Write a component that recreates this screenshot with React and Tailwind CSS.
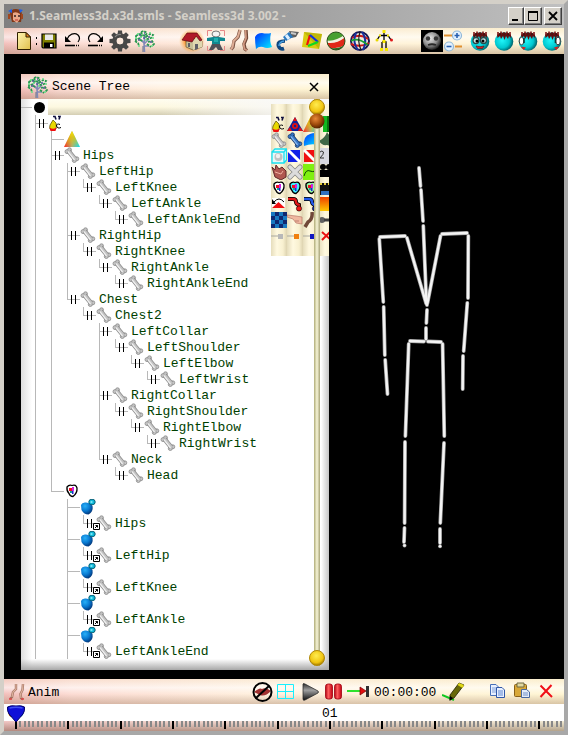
import React from "react";

const MONO = "font-['Liberation_Mono',monospace] text-[13px] leading-4";

function Svg({ w = 24, h = 24, children, className = "" }) {
  return (
    <svg width={w} height={h} viewBox={`0 0 ${w} ${h}`} className={`block shrink-0 ${className}`} aria-hidden="true">
      {children}
    </svg>
  );
}

function Defs() {
  return (
    <svg width="0" height="0" className="absolute" aria-hidden="true">
      <defs>
        <linearGradient id="paper" x1="0" y1="0" x2="1" y2="1">
          <stop offset="0" stopColor="#fff3b0" />
          <stop offset="1" stopColor="#dfc04c" />
        </linearGradient>
        <linearGradient id="flag" x1="0" y1="0" x2="1" y2="1">
          <stop offset="0" stopColor="#0030ff" />
          <stop offset="0.5" stopColor="#0090ff" />
          <stop offset="1" stopColor="#00f0ff" />
        </linearGradient>
        <linearGradient id="hot" x1="0" y1="1" x2="1" y2="1">
          <stop offset="0" stopColor="#ff2020" />
          <stop offset="0.5" stopColor="#b0b070" />
          <stop offset="1" stopColor="#00e0ff" />
        </linearGradient>
        <linearGradient id="topYellow" x1="0" y1="0" x2="0" y2="1">
          <stop offset="0" stopColor="#ffe800" />
          <stop offset="0.4" stopColor="#e8c800" stopOpacity="0.75" />
          <stop offset="1" stopColor="#e8c800" stopOpacity="0" />
        </linearGradient>
        <radialGradient id="blueBall" cx="0.35" cy="0.3" r="0.8">
          <stop offset="0" stopColor="#28b0f8" />
          <stop offset="0.5" stopColor="#0878d0" />
          <stop offset="1" stopColor="#002868" />
        </radialGradient>
        <radialGradient id="aqua" cx="0.4" cy="0.45" r="0.65">
          <stop offset="0" stopColor="#20f4f8" />
          <stop offset="0.6" stopColor="#00c8d0" />
          <stop offset="1" stopColor="#004850" />
        </radialGradient>
        <radialGradient id="gray" cx="0.4" cy="0.35" r="0.65">
          <stop offset="0" stopColor="#e8e8e8" />
          <stop offset="0.6" stopColor="#909090" />
          <stop offset="1" stopColor="#202020" />
        </radialGradient>
        <radialGradient id="gold" cx="0.45" cy="0.35" r="0.65">
          <stop offset="0" stopColor="#ffec50" />
          <stop offset="0.7" stopColor="#f0c410" />
          <stop offset="1" stopColor="#a07800" />
        </radialGradient>
        <radialGradient id="brown" cx="0.4" cy="0.35" r="0.65">
          <stop offset="0" stopColor="#e88838" />
          <stop offset="0.6" stopColor="#a04c0c" />
          <stop offset="1" stopColor="#582400" />
        </radialGradient>
        <linearGradient id="play" x1="0" y1="0" x2="0" y2="1">
          <stop offset="0" stopColor="#303030" />
          <stop offset="0.4" stopColor="#a0a0a0" />
          <stop offset="1" stopColor="#101010" />
        </linearGradient>
        <linearGradient id="pause" x1="0" y1="0" x2="1" y2="0">
          <stop offset="0" stopColor="#b00010" />
          <stop offset="0.4" stopColor="#ff6060" />
          <stop offset="1" stopColor="#c00010" />
        </linearGradient>
        <linearGradient id="heat" x1="0" y1="0" x2="0" y2="1">
          <stop offset="0" stopColor="#f04000" />
          <stop offset="1" stopColor="#ffc800" />
        </linearGradient>
        <radialGradient id="glow">
          <stop offset="0.5" stopColor="#ff9830" />
          <stop offset="1" stopColor="#ffb050" stopOpacity="0" />
        </radialGradient>
        <clipPath id="ballClip"><circle cx="12" cy="12" r="9" /></clipPath>
      </defs>
    </svg>
  );
}

function Bone({ edge = "#8c8c8c", fill = "#c4c4c4", inner = "#f0f0f0" }) {
  return (
    <Svg w={16} h={16}>
      <g fill={fill} stroke={edge} strokeWidth=".8">
        <circle cx="5.500" cy="2.800" r="2" /><circle cx="3" cy="4.600" r="2" />
        <circle cx="12.800" cy="11.800" r="2" /><circle cx="10.300" cy="13.500" r="2" />
      </g>
      <path d="M4.500 4L11.300 12.500" stroke={edge} strokeWidth="4.600" />
      <path d="M4.200 3.600L11.700 12.800" stroke={fill} strokeWidth="3" />
      <path d="M4 4.600L10.500 13" stroke={inner} strokeWidth="1.300" />
    </Svg>
  );
}

function TreeIcon() {
  return (
    <Svg>
      <path d="M12.500 23L12 14L7 9M12 15L17 10M12 14L13 5M12 17L17 17" fill="none" stroke="#8088b8" strokeWidth="1.600" />
      <path d="M11 23V17" stroke="#607090" />
      <g fill="none" stroke="#289850" strokeWidth="1.800">
        <path d="M4 7l3-2 3 1-2 3-4 2zM9 3l3-1 3 2-2 3-3-1zM14 8l4-3 3 1-2 3-4 1zM16 13l4-1 2 3-2 2M3 12l3 2 1 3M8 11l3 1M15 15l4 3" strokeDasharray="2.500 1" />
      </g>
      <path d="M5 5h2M10 5h1M17 4h2M20 9h2M3 9h2M13 11h2M19 17h2M6 17h2M8 8h2" stroke="#68e088" strokeWidth="1.500" />
      <path d="M7 6h2M12 4h1M16 8h2M6 11h2M18 13h2M11 9h2" stroke="#505898" strokeWidth="1.500" />
    </Svg>
  );
}

function Legs() {
  return (
    <Svg>
      <path d="M12 1L10 8L6 12L5 18L3 20.500" fill="none" stroke="#805848" strokeWidth="3.400" />
      <path d="M12 1L9.800 8L5.600 12L4.600 18L3 20.500" fill="none" stroke="#dcac94" strokeWidth="2" />
      <path d="M18 1L18.500 9L16 15L17 20L19 21.500" fill="none" stroke="#704838" strokeWidth="3.400" />
      <path d="M17.500 1L18 9L15.600 15L16.500 20L19 21.500" fill="none" stroke="#d09880" strokeWidth="1.800" />
    </Svg>
  );
}

function Head({ variant }) {
  return (
    <Svg>
      <circle cx="12" cy="12.500" r="9.300" fill="url(#aqua)" />
      <path d="M5 6Q7 3 12 4Q17 3 19 6L19 9L17 7L16 10L14 7L12.500 11L11 7L9 10L8 7L5.500 9Z" fill="#601010" />
      <path d="M6 3v3M9 2.500v3M12 3v3M15 2.500v3M18 3v3" stroke="#801818" strokeWidth="1.600" />
      <path d="M7 5h2M11 5h2M15 5h2" stroke="#281010" />
      {variant === "front" && (
        <g>
          <circle cx="8" cy="11.500" r="3" fill="#c8e8e8" stroke="#284848" strokeWidth="1.300" />
          <circle cx="15.500" cy="11.500" r="3" fill="#c8e8e8" stroke="#284848" strokeWidth="1.300" />
          <circle cx="9" cy="12" r="1.500" /><circle cx="15" cy="12" r="1.500" />
          <path d="M8 17q4 1.500 8 0l-1.500 2.500h-5z" fill="#e02020" stroke="#601010" strokeWidth=".7" />
        </g>
      )}
      {variant === "left" && (
        <g>
          <ellipse cx="5.500" cy="12" rx="2.300" ry="3.800" fill="#fff" stroke="#404040" />
          <path d="M8 9v5" stroke="#103838" strokeWidth="1.600" />
          <path d="M5 17.500l5 1-2.500 2.500z" fill="#d82020" />
        </g>
      )}
      {variant === "right" && (
        <g>
          <ellipse cx="18" cy="12" rx="2.300" ry="3.800" fill="#fff" stroke="#404040" />
          <path d="M15.500 9v5" stroke="#103838" strokeWidth="1.600" />
          <path d="M19 17.500l-5 1 2.500 2.500z" fill="#d82020" />
        </g>
      )}
    </Svg>
  );
}

const gearTeeth = [0, 45, 90, 135, 180, 225, 270, 315];

const toolIcons = {
  New: (
    <Svg>
      <path d="M5.500 3.500H14L18.500 8V20.500H5.500Z" fill="url(#paper)" stroke="#302000" />
      <path d="M14 3.500V8H18.500Z" fill="#e88020" stroke="#302000" />
    </Svg>
  ),
  Save: (
    <Svg>
      <path d="M6 5H20V19H7L6 18Z" fill="#808000" stroke="#000" strokeWidth="1.200" />
      <path d="M9 5.500H17V11H9Z" fill="#e8e8e8" />
      <path d="M8 13.500H18V19H8Z" fill="#000" /><path d="M14 15h2.500v3h-2.500z" fill="#fff" />
    </Svg>
  ),
  Undo: (
    <Svg>
      <path d="M6 12L9 7Q14 3 18 6Q21 9 18 13" fill="none" stroke="#000" strokeWidth="1.200" />
      <path d="M5 7V13H11Z" /><path d="M5 16.500H14" stroke="#000" strokeWidth="1.600" />
      <path d="M14 16.500H20" stroke="#000" strokeWidth="1.600" strokeDasharray="1 1" />
    </Svg>
  ),
  Redo: (
    <Svg>
      <path d="M18 12L15 7Q10 3 6 6Q3 9 6 13" fill="none" stroke="#000" strokeWidth="1.200" />
      <path d="M19 7V13H13Z" /><path d="M4 16.500H13" stroke="#000" strokeWidth="1.600" />
      <path d="M13 16.500H19" stroke="#000" strokeWidth="1.600" strokeDasharray="1 1" />
    </Svg>
  ),
  Settings: (
    <Svg>
      {gearTeeth.map((a) => (
        <path key={a} d="M10 1.500H14L14.500 7H9.500Z" fill="#484848" transform={`rotate(${a} 12 12)`} />
      ))}
      <circle cx="12" cy="12" r="5.500" fill="none" stroke="#484848" strokeWidth="4.400" />
      <circle cx="12" cy="12" r="3.200" fill="#fbe8dc" />
      <path d="M7 8Q9 5 13 5.500" fill="none" stroke="#888" strokeWidth="1.200" />
    </Svg>
  ),
  Scene: <TreeIcon />,
  Home: (
    <Svg w={26}>
      <rect x="0" y="0" width="26" height="24" rx="8" fill="url(#glow)" />
      <path d="M7 12L14 9L23 12V18L14 21L7 18Z" fill="#c8c098" stroke="#605838" strokeWidth=".7" />
      <path d="M14 12L18 7L23 12V18L14 21Z" fill="#e0d8b0" />
      <path d="M3 11L8 4H18L23 11L21 12L17 7L13 13Z" fill="#b01828" stroke="#600810" strokeWidth=".7" />
      <path d="M16 15h3v5l-3 1zM9 14h2v4H9z" fill="#606068" />
    </Svg>
  ),
  Figure: (
    <Svg>
      <path d="M3.500 7V1.500H8M16 1.500H20.500V7M20.500 17V21.500H16M8 21.500H3.500V17" fill="none" stroke="#e88888" />
      <ellipse cx="12" cy="5" rx="4" ry="3" fill="#f4f4f4" stroke="#787878" />
      <path d="M3 9L9 8H15L21 9V12H16V15H8V12H3Z" fill="#108890" />
      <path d="M8 15H16L19 21H14L12 18L9 21H5Z" fill="#505058" />
      <path d="M10 9h4v4h-4z" fill="#20b0b0" />
    </Svg>
  ),
  Walk: <Legs />,
  Surface: (
    <Svg>
      <path d="M3 8Q5 4 10 4Q15 5 19 4Q17 12 20 18Q15 20 11 18Q7 17 4 20Q3 14 3 8Z" fill="url(#flag)" />
    </Svg>
  ),
  Paint: (
    <Svg>
      <path d="M13 2L23 3L20 8L15 9Z" fill="#606060" /><path d="M15 4L20 5" stroke="#c8c8c8" strokeWidth="2" />
      <path d="M7 8L13 3L17 8L10 12Z" fill="#2878c0" /><path d="M10 6L13 10" stroke="#e0f0ff" strokeWidth="3" />
      <path d="M9 12Q1 12 2.500 17Q4 21 8 19.500" fill="none" stroke="#104880" strokeWidth="3.600" />
      <path d="M8 12Q3 13 3 17" fill="none" stroke="#48a0e0" strokeWidth="1.500" />
    </Svg>
  ),
  Material: (
    <Svg>
      <path d="M4 3L22 5L19 20L2 18Z" fill="#d8cc10" /><path d="M4 3L22 5L19 20Z" fill="#a8a000" opacity=".5" />
      <path d="M10 6L7 16" stroke="#f01010" strokeWidth="2.200" />
      <path d="M10 6L18 13" stroke="#1030e0" strokeWidth="2.200" />
      <path d="M8 17L18 13" stroke="#10d820" strokeWidth="2.200" />
    </Svg>
  ),
  Ball: (
    <Svg>
      <g clipPath="url(#ballClip)">
        <path d="M0 0H24V24H0Z" fill="#48a030" />
        <path d="M0 11Q12 14 24 3V24H0Z" fill="#f4f0e0" />
        <path d="M0 13Q12 17 24 6V14Q14 22 2 18Z" fill="#e02818" />
        <path d="M3 18Q14 22 24 13V24H3Z" fill="#306820" />
      </g>
      <circle cx="12" cy="12" r="9" fill="none" stroke="#285018" />
    </Svg>
  ),
  Globe: (
    <Svg>
      <circle cx="12" cy="12" r="9" fill="#f0ece0" stroke="#181850" strokeWidth="2" />
      <path d="M4 9Q12 4 20 10M3 15Q12 19 21 14" fill="none" stroke="#d01818" strokeWidth="2" />
      <path d="M8 4Q4 13 10 21M14 3Q20 11 15 21" fill="none" stroke="#1830a0" strokeWidth="2" />
      <path d="M3 12Q10 8 20 16" fill="none" stroke="#18a030" strokeWidth="1.600" />
      <path d="M12 3Q9 12 13 21" fill="none" stroke="#202020" strokeWidth="1.200" />
    </Svg>
  ),
  Skeleton: (
    <Svg>
      <path d="M12 3V13M5 11L8 6.500H16L19 11M10 13H14V20M10 13V20" fill="none" stroke="#000" strokeWidth="1.300" />
      <path d="M10.500 1h3v3h-3zM10.500 11h3v3h-3zM8 19h3v3H8zM13 19h3v3h-3zM7 5.500h2v2H7zM15 5.500h2v2h-2z" fill="#f8e800" />
      <circle cx="5" cy="11" r="1.500" fill="#e8d800" /><circle cx="19.500" cy="11" r="1.500" fill="#e01818" />
    </Svg>
  ),
  Face: (
    <Svg>
      <path d="M1 1H23V23H1Z" /><circle cx="12" cy="12" r="9" fill="url(#gray)" />
      <circle cx="8" cy="9.500" r="2.200" fill="#383838" /><circle cx="16" cy="9.500" r="2.200" fill="#383838" />
      <path d="M8 16Q12 14.500 16 16" fill="none" stroke="#282828" strokeWidth="1.800" />
    </Svg>
  ),
  Zoom: (
    <Svg>
      <path d="M0 6.500H10M11 17.500H18" stroke="#e09030" strokeWidth="2" />
      <circle cx="13" cy="6.500" r="4.500" fill="#e4f2ff" stroke="#90b8d8" strokeWidth="1.200" />
      <path d="M10.500 6.500H15.500M13 4V9" stroke="#2860b0" strokeWidth="1.600" />
      <circle cx="5" cy="17.500" r="4.500" fill="#e4f2ff" stroke="#90b8d8" strokeWidth="1.200" />
      <path d="M2.500 17.500H7.500" stroke="#2860b0" strokeWidth="1.600" />
    </Svg>
  ),
  "Head front": <Head variant="front" />,
  "Head back": <Head variant="back" />,
  "Head left": <Head variant="left" />,
  "Head right": <Head variant="right" />,
};

function Tool({ name }) {
  return (
    <button type="button" aria-label={name} className="flex h-6 w-6 shrink-0 items-center justify-center">
      {toolIcons[name]}
    </button>
  );
}

const BAR =
  "bg-[linear-gradient(180deg,rgba(240,220,190,0.3),rgba(255,255,255,0.6)_35%,rgba(255,255,240,0)_60%,rgba(150,110,80,0.36)),linear-gradient(90deg,#f3c0bc,#fcdcd4_12%,#fff0de_45%,#fff6d4)]";

function TitleBar() {
  const btn =
    "flex h-[18px] items-center justify-center border border-t-white border-l-white border-r-[#404040] border-b-[#404040] bg-[#d4d0c8] shadow-[inset_-1px_-1px_0_#808080]";
  return (
    <header className="flex h-6 items-center bg-linear-to-r from-[#808080] to-[#c0c0c0] pr-[2px] pl-1">
      <Svg w={16} h={18}>
        <path d="M2 7Q2 2 8 2Q14 2 14 8L13 15H4Z" fill="#803818" />
        <path d="M5 6Q8 4 12 7L12 12L9 16L5 13Z" fill="#e8a888" />
        <path d="M6 9h2M10 9h2" stroke="#302020" strokeWidth="1.400" /><path d="M7 13h3" stroke="#c03030" />
        <path d="M0 4L4 2L4 6ZM11 2L15 3L12 6Z" fill="#2060e8" /><path d="M1 7v5M14 7v5" stroke="#a04820" strokeWidth="2" />
      </Svg>
      <h1 className="ml-[5px] min-w-0 flex-1 truncate font-['Noto_Sans',sans-serif] text-[12px] leading-4 font-bold text-[#d4d0c8]">
        1.Seamless3d.x3d.smls - Seamless3d 3.002 -
      </h1>
      <button type="button" aria-label="Minimize" className={`${btn} w-4`}>
        <Svg w={10} h={10}><path d="M1 8H7V10H1Z" /></Svg>
      </button>
      <button type="button" aria-label="Maximize" className={`${btn} w-[18px]`}>
        <Svg w={10} h={10}><path d="M.5 1H9.500V9.500H.5Z" fill="none" stroke="#000" /><path d="M0 0H10V2H0Z" /></Svg>
      </button>
      <button type="button" aria-label="Close" className={`${btn} ml-[2px] w-[18px]`}>
        <Svg w={10} h={10}><path d="M1 1L9 9M9 1L1 9" stroke="#000" strokeWidth="1.800" /></Svg>
      </button>
    </header>
  );
}

function Toolbar() {
  return (
    <div role="toolbar" aria-label="Main" className={`flex h-[26px] items-center overflow-hidden pl-2 ${BAR}`}>
      <Tool name="New" />
      <span className="-mr-1 flex w-1 flex-col gap-1" aria-hidden="true">
        <i className="h-[2px] w-px bg-black" /><i className="h-[2px] w-px bg-black" />
      </span>
      {["Save", "Undo", "Redo", "Settings", "Scene"].map((n) => <Tool key={n} name={n} />)}
      <span className="w-6 shrink-0" />
      {["Home", "Figure", "Walk", "Surface", "Paint", "Material", "Ball", "Globe", "Skeleton"].map((n) => <Tool key={n} name={n} />)}
      <span className="w-6 shrink-0" />
      {["Face", "Zoom", "Head front", "Head back", "Head left", "Head right"].map((n) => <Tool key={n} name={n} />)}
    </div>
  );
}

/* Guide codes: "|" line through, " " empty, "t" branch, "l" last branch. */
function Guide({ kind, plus, end }) {
  const line = kind !== " ";
  const full = kind === "|" || kind === "t";
  return (
    <span className={`relative block h-4 shrink-0 ${end ? "w-[13px]" : "w-4"}`}>
      {line && <i className={`absolute top-0 left-0 w-px bg-[#b8b8b8] ${full ? "h-4" : "h-2"}`} />}
      {(kind === "t" || kind === "l") && <i className="absolute top-2 left-0 h-px w-full bg-[#b8b8b8]" />}
      {plus && (
        <>
          <i className="absolute top-1 left-1 h-[9px] w-px bg-black" />
          <i className="absolute top-1 left-2 h-[9px] w-px bg-black" />
        </>
      )}
    </span>
  );
}

const Bug = () => (
  <Svg w={16} h={16}>
    <path d="M5 1.500h2l1 3M10 1.500h2l-1 3" fill="none" stroke="#101040" strokeWidth="1.600" />
    <path d="M5 5L8 8Q9.500 15.500 5 15.500Q.5 15.500 2 10Z" fill="#e8d800" stroke="#504800" strokeWidth=".7" />
    <path d="M1.500 12.500Q5 15 8.500 12.500L7.500 16H2.500Z" fill="#f01010" />
    <path d="M12 9.500Q8.500 8 8.500 11Q9.500 14 13 12.500" fill="none" stroke="#000" />
  </Svg>
);
const Mask = ({ ring = "#fff" }) => (
  <Svg w={16} h={16}>
    <path d="M3 4Q5 1.500 8 2.500Q12 1 13 5Q13.500 10 9 13.500Q6 13.500 5 10.500Q2.500 8 3 4Z" fill={ring} stroke="#000" strokeWidth="1.300" />
    <path d="M5 5h3v3H5z" fill="#f01020" /><path d="M8 4h2v4H8z" fill="#d020e0" />
    <path d="M6 8h2v2H6z" fill="#10a0a0" /><path d="M8 8h1.500v3H8z" fill="#2020d0" />
  </Svg>
);
const Prism = () => (
  <Svg w={16} h={16}>
    <path d="M8 0L16 16H0Z" fill="url(#hot)" /><path d="M8 0L16 16H0Z" fill="url(#topYellow)" />
  </Svg>
);
const Drop = () => (
  <Svg w={16} h={16}>
    <path d="M1 6Q2 3 6 3.500Q11 4 12.500 7Q13.500 13 8.500 15.500Q4 15.500 1.500 11Z" fill="url(#blueBall)" />
    <ellipse cx="12" cy="3" rx="3.200" ry="2.800" fill="#10b8d8" stroke="#086078" />
    <ellipse cx="11.500" cy="3" rx="1.200" ry="1" fill="#80e8f8" />
  </Svg>
);

const rows = [
  ["t", "", "bug", 1],
  ["|t", "", "prism", 0],
  ["|t", "Hips", "bone", 1],
  ["||t", "LeftHip", "bone", 1],
  ["|||l", "LeftKnee", "bone", 1],
  ["||| l", "LeftAnkle", "bone", 1],
  ["|||  l", "LeftAnkleEnd", "bone", 1],
  ["||t", "RightHip", "bone", 1],
  ["|||l", "RightKnee", "bone", 1],
  ["||| l", "RightAnkle", "bone", 1],
  ["|||  l", "RightAnkleEnd", "bone", 1],
  ["||l", "Chest", "bone", 1],
  ["|| l", "Chest2", "bone", 1],
  ["||  t", "LeftCollar", "bone", 1],
  ["||  |l", "LeftShoulder", "bone", 1],
  ["||  | l", "LeftElbow", "bone", 1],
  ["||  |  l", "LeftWrist", "bone", 1],
  ["||  t", "RightCollar", "bone", 1],
  ["||  |l", "RightShoulder", "bone", 1],
  ["||  | l", "RightElbow", "bone", 1],
  ["||  |  l", "RightWrist", "bone", 1],
  ["||  l", "Neck", "bone", 1],
  ["||   l", "Head", "bone", 1],
  ["|l", "", "mask", 0],
  ...["Hips", "LeftHip", "LeftKnee", "LeftAnkle", "LeftAnkleEnd"].flatMap((n) => [
    ["| t", "", "drop", 0],
    ["| |l", n, "link", 1],
  ]),
];

function TreeRow({ row: [guides, label, icon, plus] }) {
  const cells = guides.split("");
  return (
    <li role="treeitem" aria-label={label || icon} className="flex h-4 items-center pl-[14px]">
      {cells.map((c, i) => (
        <Guide key={i} kind={c} end={i === cells.length - 1} plus={!!plus && i === cells.length - 1} />
      ))}
      <span className="relative block shrink-0">
        {icon === "bug" && <Bug />}
        {icon === "prism" && <Prism />}
        {icon === "mask" && <Mask />}
        {icon === "drop" && <Drop />}
        {(icon === "bone" || icon === "link") && <Bone />}
        {icon === "link" && (
          <Svg w={7} h={7} className="absolute top-2 -left-[3px]">
            <path d="M.5 .5H6.500V6.500H.5Z" fill="#fff" stroke="#000" />
            <path d="M2 5L4.500 2.500M2.500 2.500H4.500V4.500" fill="none" stroke="#000" />
          </Svg>
        )}
      </span>
      {label && <span className={`ml-[3px] pt-[2px] text-[#004000] ${MONO}`}>{label}</span>}
    </li>
  );
}

const Tri = ({ c }) => (
  <Svg w={16} h={16}>
    <path d="M1 2H13V14H1Z" fill={c} /><path d="M1 2L13 14" stroke="#fff" strokeWidth="3" />
  </Svg>
);
const Node = ({ c }) => <Svg w={16} h={16}><path d="M0 8H10" stroke="#a8a8a0" /><path d="M7 6h5v5H7z" fill={c} /></Svg>;
const Pipe = ({ c, tip }) => (
  <Svg w={16} h={16}>
    <path d="M1 3H6Q9 3 9 6Q9 8 12 9V12" fill="none" stroke="#000" strokeWidth="4" />
    <path d="M1 3H6Q9 3 9 6Q9 8 12 9V12" fill="none" stroke={c} strokeWidth="2.400" />
    <circle cx="12" cy="12.500" r="2.600" fill={tip} stroke="#000" strokeWidth=".6" />
  </Svg>
);

const palette = [
  ["Bug", <Bug />],
  ["Cone", <Svg w={16} h={16}><path d="M8 1L16 15H0Z" fill="#102098" /><path d="M8 1L10 5H6ZM3 11L5 15H0ZM13 11L16 15H11Z" fill="#e01010" /><circle cx="8" cy="10" r="3" fill="#e01010" /><circle cx="8" cy="10" r="1.200" fill="#102098" /></Svg>],
  ["Prism", <Prism />],
  ["Green", <Svg w={16} h={16}><path d="M4 0H8V16H4Z" fill="#10b820" /><path d="M8 0H16V16H8Z" fill="#087010" /></Svg>],
  ["Bone", <Bone />],
  ["Blue bone", <Bone fill="#3878c8" edge="#183868" inner="#88b8f0" />],
  ["Surface", <Svg w={16} h={16}><path d="M1 14Q0 4 7 2Q12 0 16 2V13Q8 11 1 14Z" fill="url(#flag)" /></Svg>],
  ["Spade", <Svg w={16} h={16}><path d="M8 0Q12 6 16 8Q12 15 8 13Q3 14 0 9Q6 6 8 0Z" fill="#406848" /></Svg>],
  ["Box", <Svg w={16} h={16}><path d="M1 4H13V15H1ZM1 4L4 1H15.500V12L13 15M13 4L15.500 1" fill="#e8f8f8" stroke="#18e0f0" strokeWidth="1.300" /><circle cx="7.500" cy="9" r="4" fill="#c0c0c0" /><circle cx="7" cy="8" r="2.200" fill="#f0f0f0" /></Svg>],
  ["Blue split", <Tri c="#1020e8" />],
  ["Red split", <Tri c="#f01010" />],
  ["Layers", <Svg w={16} h={16}><path d="M0 0H16V16H0Z" fill="#d8d8e0" /><path d="M1 4Q3 2 4.500 4Q5 6 1 10H5" fill="none" stroke="#303030" /></Svg>],
  ["Hand", <Svg w={16} h={16}><path d="M1 3L4 6L5 1L8 5L11 3L15 7V13L10 16L4 13Z" fill="#b05850" stroke="#602828" /><path d="M4 8L10 10L12 7" fill="none" stroke="#f0b0a0" /></Svg>],
  ["Bones", <Svg w={16} h={16}><path d="M3 3L13 13M13 3L3 13" stroke="#888" strokeWidth="5" strokeLinecap="round" /><path d="M3 3L13 13M13 3L3 13" stroke="#dcdcdc" strokeWidth="3.400" strokeLinecap="round" /></Svg>],
  ["Curve", <Svg w={16} h={16}><path d="M0 0H16V16H0Z" fill="#80f010" /><path d="M1 12Q3 5 7 7Q12 9 16 4" fill="none" stroke="#104800" /></Svg>],
  ["Camera", <Svg w={16} h={16}><circle cx="4" cy="3" r="3" /><circle cx="10" cy="3" r="3" /><path d="M1 6H12V13H1Z" /></Svg>],
  ["Mask", <Mask />],
  ["Cyan mask", <Mask ring="#40f0ff" />],
  ["Green mask", <Mask ring="#90f8a8" />],
  ["Clapper", <Svg w={16} h={16}><path d="M0 3H16V15H0Z" fill="#101010" /><path d="M1 4H16" stroke="#e8d040" strokeWidth="2" strokeDasharray="2 2" /><path d="M2 11h14v4H2z" fill="#3070c0" /></Svg>],
  ["Rotate", <Svg w={16} h={16}><path d="M1 2H14V12H1Z" fill="#fff" /><path d="M1 12L7.500 6L14 12Z" fill="#f01010" /><path d="M3 6Q8 0 13 6" fill="none" stroke="#000" /><path d="M1 3V8H5Z" /></Svg>],
  ["Red pipe", <Pipe c="#e01818" tip="#f01818" />],
  ["Blue pipe", <Pipe c="#2058e8" tip="#102890" />],
  ["Heat", <Svg w={16} h={16}><path d="M0 1H16V15H0Z" fill="url(#heat)" /></Svg>],
  ["Checker", <Svg w={16} h={16}><path d="M0 0H16V16H0Z" fill="#102870" /><path d="M0 0h4v4H0zM8 0h4v4H8zM4 4h4v4H4zM12 4h4v4h-4zM0 8h4v4H0zM8 8h4v4H8zM4 12h4v4H4zM12 12h4v4h-4z" fill="#1878c0" /></Svg>],
  ["Point", <Svg w={16} h={16}><path d="M0 3L9 4L15 5V12L9 11L6 7L0 5Z" fill="#f0b8a0" stroke="#b87868" strokeWidth=".7" /><path d="M8 9h4" stroke="#c08070" /></Svg>],
  ["Arm", <Svg w={16} h={16}><path d="M9 0Q10 7 5 10L2 15" fill="none" stroke="#704838" strokeWidth="3.500" /></Svg>],
  ["Key", <Svg w={16} h={16}><circle cx="3" cy="8" r="3" fill="#606060" /><path d="M5 8H16" stroke="#404040" strokeWidth="3" /></Svg>],
  ["Gray node", <Node c="#b8b8b8" />],
  ["Orange node", <Node c="#f08010" />],
  ["Blue node", <Node c="#1018c0" />],
  ["Delete", <Svg w={16} h={16}><path d="M3 4L12 12M11 4L3 12" stroke="#e81010" strokeWidth="2" /></Svg>],
];

function ScenePanel() {
  return (
    <section aria-label="Scene Tree" className="relative w-[308px] shrink-0 overflow-hidden bg-white">
      <div className={`flex h-[25px] items-center pr-[7px] pl-1 ${BAR}`}>
        <TreeIcon />
        <h2 className={`ml-[3px] flex-1 text-black ${MONO}`}>Scene Tree</h2>
        <button type="button" aria-label="Close panel" className="flex h-4 w-4 items-center justify-center">
          <Svg w={10} h={10}><path d="M1 1L9 9M9 1L1 9" stroke="#000" strokeWidth="1.500" /></Svg>
        </button>
      </div>
      <div className="bg-[linear-gradient(0deg,#a8a8a8,rgba(255,255,255,0)_11px),linear-gradient(90deg,#dedede,#fff_11px,#fff_300px,#c4c4c4)] pb-[11px]">
        <div className="flex h-4 items-center">
          <i className="h-px w-[11px] bg-[#b8b8b8]" />
          <i className="ml-[2px] h-[11px] w-[11px] rounded-full bg-black" />
          <i className="ml-[3px] h-4 flex-1 bg-[linear-gradient(90deg,rgba(255,255,255,0)_40%,#f8f8f8_90%),linear-gradient(180deg,#fffdf0,#fdf8e0_50%,#d4ceb4)]" />
        </div>
        <ul role="tree">
          {rows.map((r, i) => <TreeRow key={i} row={r} />)}
        </ul>
      </div>
      <div className="absolute top-[30px] left-[250px] grid h-[152px] w-16 grid-cols-4 content-start bg-[repeating-linear-gradient(90deg,#e6ddbc,#fff9e0_6px,#f8f0d0_12px,#ddd3b0_16px)] pt-3">
        {palette.map(([name, icon]) => (
          <button key={name} type="button" aria-label={name} className="h-4 w-4">{icon}</button>
        ))}
      </div>
      <div className="absolute top-[25px] bottom-1 left-[288px] w-4">
        <div className="mx-auto h-full w-[6px] bg-linear-to-r from-[#b0ac78] via-[#f8f6d8] to-[#a8a478]" />
        <Svg w={16} h={16} className="absolute top-0 left-0"><circle cx="8" cy="8" r="7.500" fill="url(#gold)" stroke="#b08808" /></Svg>
        <Svg w={16} h={16} className="absolute top-[14px] left-0"><circle cx="8" cy="8" r="7.500" fill="url(#brown)" /></Svg>
        <Svg w={16} h={16} className="absolute bottom-0 left-0"><circle cx="8" cy="8" r="7.500" fill="url(#gold)" stroke="#b08808" /></Svg>
        <input type="range" aria-label="Scroll tree" defaultValue={0} className="absolute inset-0 h-full w-4 opacity-0 [writing-mode:vertical-lr]" />
      </div>
    </section>
  );
}

const bones = [
  [419, 168, 420.5, 186], [421, 190, 423, 221], [423.3, 226, 426.5, 304],
  [380, 237, 405, 236], [407, 238, 426, 303], [442, 234, 467, 233], [440.5, 236, 427.5, 303],
  [379.3, 239, 383.3, 302], [383.7, 307, 384.8, 355], [385.2, 360, 387.5, 394],
  [468.3, 236, 468, 298], [467.3, 303, 463.7, 351], [463, 356, 462.7, 389],
  [427, 304, 427, 305], [427, 310, 426.4, 323], [426, 328, 426, 339],
  [410, 341, 424, 341.5], [428, 341.5, 441, 342],
  [408.7, 344, 405.4, 436], [405, 442, 404.6, 523], [404.5, 528, 404, 542], [404.5, 545.5, 404.6, 545.5],
  [442.6, 344, 444.3, 436], [444, 443, 440.3, 523], [440, 529, 440, 543], [440, 546.3, 440.1, 546.3],
];

function Skeleton() {
  return (
    <svg viewBox="329 54 235 625" className="min-w-0 flex-1" role="img" aria-label="Skeleton view">
      <g strokeLinecap="round">
        {bones.map(([a, b, c, d], i) => <line key={i} x1={a} y1={b} x2={c} y2={d} stroke="#a0a0a0" strokeWidth="3.800" />)}
        {bones.map(([a, b, c, d], i) => <line key={i} x1={a} y1={b} x2={c} y2={d} stroke="#f4f4f4" strokeWidth="2.400" />)}
      </g>
    </svg>
  );
}

function AnimButton({ name, children }) {
  return <button type="button" aria-label={name} className="flex h-6 w-6 shrink-0 items-center justify-center">{children}</button>;
}

function AnimBar() {
  return (
    <div role="toolbar" aria-label="Animation" className={`flex h-[25px] items-center pr-[6px] ${BAR}`}>
      <span className="flex w-6 shrink-0 justify-center"><Svg w={17} h={18}>
        <path d="M8 1L8 6L5 9L4 14L2 16" fill="none" stroke="#a07060" strokeWidth="2.400" />
        <path d="M15 1L14.500 7L12.500 11L13 15L15 16.500" fill="none" stroke="#a07060" strokeWidth="2.400" />
        <path d="M8 1L8 6L5 9L4 14M15 1L14.500 7L12.500 11L13 15" fill="none" stroke="#dcb09c" strokeWidth="1.200" />
        <path d="M1 16h3M13 16h3" stroke="#e04848" strokeWidth="1.500" />
      </Svg></span>
      <span className={`flex-1 pt-[2px] ${MONO}`}>Anim</span>
      <AnimButton name="No kiss"><Svg>
        <path d="M4 12Q10 7 12 9Q16 7 21 11Q15 17 10 15Z" fill="#a03030" />
        <circle cx="12.500" cy="12" r="9" fill="none" stroke="#000" strokeWidth="2" /><path d="M6 18L19 6" stroke="#000" strokeWidth="2" />
      </Svg></AnimButton>
      <AnimButton name="Grid"><Svg><path d="M3.500 4.500H19.500V18.500H3.500ZM11.500 4.500V18.500M3.500 11.500H19.500" fill="none" stroke="#18f0ff" /></Svg></AnimButton>
      <AnimButton name="Play"><Svg><path d="M5 4Q5 3 7 4L20 11Q21 12 20 13L7 20Q5 21 5 19Z" fill="url(#play)" stroke="#202020" strokeWidth=".7" /></Svg></AnimButton>
      <AnimButton name="Pause"><Svg><rect x="3.500" y="4" width="7" height="15" rx="2.500" fill="url(#pause)" stroke="#a00010" strokeWidth=".8" /><rect x="12.500" y="4" width="7" height="15" rx="2.500" fill="url(#pause)" stroke="#a00010" strokeWidth=".8" /></Svg></AnimButton>
      <AnimButton name="Go to end"><Svg><path d="M1 11H15" stroke="#18e018" strokeWidth="1.800" /><path d="M14 7L20 11L14 15Z" fill="#e01010" stroke="#700" strokeWidth=".7" /><path d="M20 6h3v11h-3z" fill="#303030" /></Svg></AnimButton>
      <output className={`ml-[4px] w-16 pt-[2px] ${MONO}`}>00:00:00</output>
      <span className="ml-1"><AnimButton name="Edit"><Svg>
        <path d="M0 15L12 20" stroke="#10c820" strokeWidth="2" />
        <path d="M17 3L22 5L12 18L8 20L8 15Z" fill="#686808" stroke="#202000" strokeWidth=".8" /><path d="M17 3L22 5L20.500 8L15.500 5Z" fill="#e0d818" /><path d="M8 16L11 18L7.500 21Z" />
      </Svg></AnimButton></span>
      <span className="w-5 shrink-0" />
      <AnimButton name="Copy"><Svg>
        <path d="M4.500 4.500H10L12.500 7V15.500H4.500Z" fill="#e8f0ff" stroke="#4870b8" /><path d="M6 8h5M6 10h5M6 12h5" stroke="#80a0d8" />
        <path d="M10.500 7.500H16L18.500 10V17.500H10.500Z" fill="#e8f0ff" stroke="#3058a8" /><path d="M12 11h5M12 13h5M12 15h5" stroke="#6088d0" />
      </Svg></AnimButton>
      <AnimButton name="Paste"><Svg>
        <rect x="4.500" y="4.500" width="12" height="12" rx="1" fill="#d8a838" stroke="#886018" /><path d="M7 3h7v4H7z" fill="#e0d8a0" stroke="#706840" />
        <path d="M11.500 9.500H16.500L19.500 12V17.500H11.500Z" fill="#e4ecf8" stroke="#4868a0" /><path d="M13 13h5M13 15h5" stroke="#7090c8" />
      </Svg></AnimButton>
      <AnimButton name="Delete"><Svg><path d="M6.500 5.500L18 17M17.500 5L6.500 17" stroke="#f01018" strokeWidth="2" /></Svg></AnimButton>
    </div>
  );
}

const ticks = Array.from({ length: 126 }, (_, i) => ({ x: Math.round(11 + (i * 157) / 36), major: i % 12 === 0 }));

function Timeline() {
  return (
    <div className="relative bg-white">
      <div className={`flex h-[17px] items-center pt-[2px] ${MONO}`}>
        <span className="ml-1 w-4">00</span>
        <span className="ml-[298px]">01</span>
      </div>
      <svg className="block h-[10px] w-full bg-[linear-gradient(180deg,rgba(255,255,255,0.2),rgba(90,60,40,0.4)),linear-gradient(90deg,#f0bcb8,#f4d8cc_50%,#f0e8cc)]" aria-hidden="true">
        {ticks.map((t) => <rect key={t.x} x={t.x} y="0" width="2" height={t.major ? 8 : 6} fill={t.major ? "#000" : "#888"} />)}
      </svg>
      <button type="button" aria-label="Playhead" className="absolute top-px left-[3px]">
        <Svg w={18} h={17}>
          <path d="M.5 2Q4 0 9 1Q14 0 17.500 2Q18 6 16 9L9.500 16.500H8.500L2 9Q0 6 .5 2Z" fill="#1010d8" stroke="#000068" />
          <path d="M2.500 3Q9 1.500 15.500 3" fill="none" stroke="#4050f0" strokeWidth="1.500" />
        </Svg>
      </button>
    </div>
  );
}

export default function App() {
  return (
    <div className="border-4 border-t-[#d4d0c8] border-r-[#a8a8a8] border-b-[#a8a8a8] border-l-[#d4d0c8] bg-black">
      <Defs />
      <TitleBar />
      <Toolbar />
      <main className="flex bg-black pt-5 pb-[9px] pl-[17px]">
        <ScenePanel />
        <div className="-mt-5 -mb-[9px] flex min-w-0 flex-1"><Skeleton /></div>
      </main>
      <AnimBar />
      <Timeline />
    </div>
  );
}
